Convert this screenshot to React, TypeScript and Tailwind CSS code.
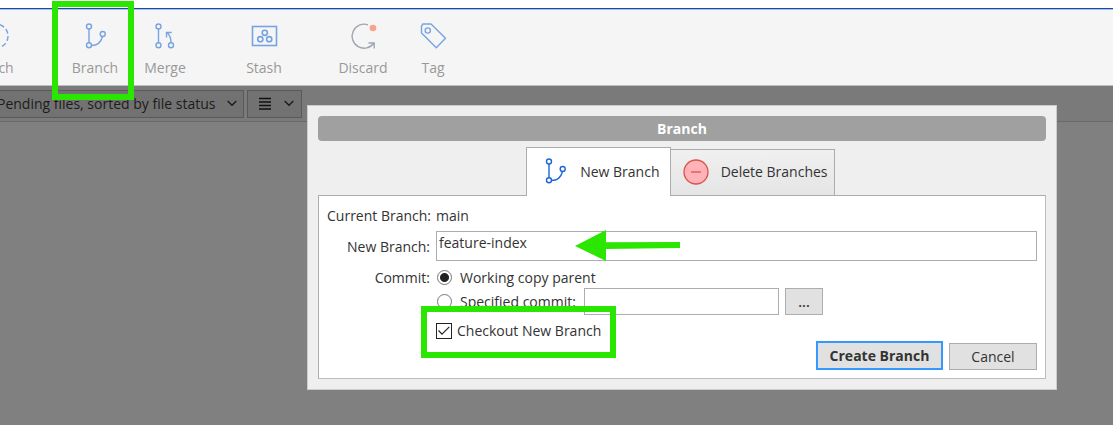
import { useState } from "react";
import type { ReactNode } from "react";

function BranchGlyph({ color }: { color: string }) {
  return (
    <svg width="26" height="28" viewBox="0 0 26 28" fill="none" stroke={color} strokeWidth="1.4">
      <path d="M7 7v14M9.500 23.500c6 0 9.500-3 11-9" />
      <circle cx="7" cy="4.500" r="2.500" />
      <circle cx="7" cy="23.300" r="2.500" />
      <circle cx="20.700" cy="12" r="2.500" />
    </svg>
  );
}

function FetchGlyph() {
  return (
    <svg width="28" height="28" viewBox="0 0 28 28" fill="none" stroke="#78a3e3" strokeWidth="1.4">
      <circle cx="14" cy="14" r="12" strokeDasharray="5 2.500" />
    </svg>
  );
}

function MergeGlyph() {
  return (
    <svg width="26" height="28" viewBox="0 0 26 28" fill="none" stroke="#78a3e3" strokeWidth="1.4">
      <path d="M6.500 7v14M19 21c0-4.500-1-8-4.200-10.500M14.500 15.500v-5h5.200" />
      <circle cx="6.500" cy="4.500" r="2.500" />
      <circle cx="6.500" cy="23.300" r="2.500" />
      <circle cx="19" cy="23.300" r="2.500" />
    </svg>
  );
}

function StashGlyph() {
  return (
    <svg width="28" height="28" viewBox="0 0 28 28" fill="none" stroke="#78a3e3" strokeWidth="1.6">
      <rect x="2.500" y="4.500" width="24" height="19" />
      <circle cx="14.800" cy="10.800" r="2.600" />
      <circle cx="10.300" cy="17.200" r="2.600" />
      <circle cx="19.200" cy="17.200" r="2.600" />
    </svg>
  );
}

function DiscardGlyph() {
  return (
    <svg width="28" height="28" viewBox="0 0 28 28" fill="none" stroke="#a0a7b1" strokeWidth="1.4">
      <path d="M19 2.800A12 12 0 1 0 25 21M19.500 21h5.700v5.500" />
      <circle cx="24" cy="6" r="3.300" fill="#fba18f" stroke="none" />
    </svg>
  );
}

function TagGlyph() {
  return (
    <svg width="28" height="28" viewBox="0 0 28 28" fill="none" stroke="#78a3e3" strokeWidth="1.4" strokeLinejoin="round">
      <path d="M4 2h8L26.500 16.300 17.300 25.800 2.500 11V4z" />
      <circle cx="8.800" cy="8.500" r="2.600" />
    </svg>
  );
}

function DeleteGlyph() {
  return (
    <svg width="26" height="26" viewBox="0 0 26 26" fill="none" stroke="#d9534a" strokeWidth="1.300">
      <circle cx="13" cy="13" r="12" fill="#ffb3b8" />
      <path d="M8 13h10" />
    </svg>
  );
}

function Chevron() {
  return (
    <svg width="10" height="7" viewBox="0 0 10 7" fill="none" stroke="#1c1c1c" strokeWidth="1.400">
      <path d="M0.700 1L5 5.300 9.300 1" />
    </svg>
  );
}

function Tool({ icon, label, marked = false }: { icon: ReactNode; label: string; marked?: boolean }) {
  return (
    <button type="button" className="relative flex w-[70px] shrink-0 flex-col items-center pt-[13px] text-[#999]">
      {icon}
      <span className="mt-2 leading-5">{label}</span>
      {marked && (
        <span className="pointer-events-none absolute -top-2 -right-1 -left-2 z-10 h-[99px] border-6 border-[#2be600]" />
      )}
    </button>
  );
}

const radio =
  "m-0 size-[15px] shrink-0 appearance-none rounded-full border border-[#777] bg-white checked:bg-[radial-gradient(circle,#222_0_4px,#fff_5px)]";

export default function App() {
  const [name, setName] = useState("feature-index");
  const [source, setSource] = useState("parent");
  const [commit, setCommit] = useState("");
  const [checkout, setCheckout] = useState(true);

  return (
    <div className="relative flex min-h-screen flex-col overflow-hidden bg-[#808080] font-['Open_Sans','Noto_Sans',sans-serif] text-[14px] text-[#333]">
      <div className="h-2 bg-white" />
      <nav className="flex h-[78px] border-t border-b border-t-[#0a4db5] border-b-[#bfbfbf] bg-[#f5f5f5] shadow-[inset_0_1px_0_#b3c0d9]">
        <div className="-ml-[39px] flex gap-[29px]">
          <Tool icon={<FetchGlyph />} label="Fetch" />
          <div className="flex">
            <Tool icon={<BranchGlyph color="#78a3e3" />} label="Branch" marked />
            <Tool icon={<MergeGlyph />} label="Merge" />
          </div>
          <Tool icon={<StashGlyph />} label="Stash" />
          <div className="flex">
            <Tool icon={<DiscardGlyph />} label="Discard" />
            <Tool icon={<TagGlyph />} label="Tag" />
          </div>
        </div>
      </nav>

      <div className="flex h-9 items-center gap-[3px] border-b border-[#696969] bg-[#7a7a7a]">
        <div className="relative -ml-2">
          <select
            aria-label="File filter"
            className="block h-7 w-[252px] appearance-none border border-[#5a5a5a] bg-[#727272] pl-1 text-[#1c1c1c]"
          >
            <option>Pending files, sorted by file status</option>
          </select>
          <span className="pointer-events-none absolute inset-y-0 right-[7px] flex items-center">
            <Chevron />
          </span>
        </div>
        <button
          type="button"
          aria-label="View options"
          className="flex h-7 w-[55px] items-center justify-between border border-[#5a5a5a] bg-[#727272] pr-[7px] pl-[11px]"
        >
          <svg width="12" height="14" viewBox="0 0 12 14" stroke="#111" strokeWidth="1.300">
            <path d="M0 1.500h12M0 5h12M0 8.500h12M0 12h12" />
          </svg>
          <Chevron />
        </button>
      </div>

      <div
        role="dialog"
        aria-labelledby="dialog-title"
        className="absolute top-[105px] right-14 left-[307px] border border-[#ccc] bg-[#efefef] p-2.5"
      >
        <h1 id="dialog-title" className="rounded bg-[#a0a0a0] text-center leading-[25px] font-bold text-white">
          Branch
        </h1>

        <div role="tablist" className="-mb-px flex items-end justify-center pt-1.5 pr-1">
          <button
            type="button"
            role="tab"
            aria-selected="true"
            className="flex h-[49px] w-[145px] items-center justify-between border border-b-0 border-[#acacac] bg-white pr-2.5 pb-0.5 pl-[15px]"
          >
            <BranchGlyph color="#1f66d6" />
            New Branch
          </button>
          <button
            type="button"
            role="tab"
            aria-selected="false"
            className="flex h-[47px] w-[164px] items-center justify-between border border-l-0 border-[#acacac] bg-linear-to-b from-[#f0f0f0] to-[#e5e5e5] pr-1.5 pb-0.5 pl-3"
          >
            <DeleteGlyph />
            Delete Branches
          </button>
        </div>

        <form
          onSubmit={(e) => e.preventDefault()}
          className="border border-[#bcbcbc] border-t-[#acacac] border-l-[#acacac] bg-white pt-2.5 pr-2 pb-2 pl-2"
        >
          <div className="grid grid-cols-[103px_1fr] gap-x-1.5 leading-5">
            <span className="text-right whitespace-nowrap">Current Branch:</span>
            <span>main</span>

            <label htmlFor="name" className="mt-[5px] text-right leading-8">
              New Branch:
            </label>
            <div className="relative mt-[5px]">
              <input
                id="name"
                value={name}
                onChange={(e) => setName(e.target.value)}
                className="block h-[30px] w-full border border-[#abadb3] bg-white px-0.5 pb-[7px] outline-none"
              />
              <svg
                className="pointer-events-none absolute -top-0.5 left-[139px]"
                width="106"
                height="32"
                viewBox="0 0 106 32"
                fill="#2be600"
                aria-hidden="true"
              >
                <path d="M0 17L31 1V13.300L105 13V19L31 20V32z" />
              </svg>
            </div>

            <span className="mt-[5px] text-right">Commit:</span>
            <label className="mt-1 flex h-[21px] items-center gap-2 pl-px">
              <input
                type="radio"
                name="source"
                className={radio}
                checked={source === "parent"}
                onChange={() => setSource("parent")}
              />
              Working copy parent
            </label>

            <div className="col-start-2 flex gap-1.5">
              <label className="flex w-[142px] items-center gap-2 pl-px whitespace-nowrap">
                <input
                  type="radio"
                  name="source"
                  className={radio}
                  checked={source === "specified"}
                  onChange={() => setSource("specified")}
                />
                Specified commit:
              </label>
              <input
                aria-label="Commit to branch from"
                value={commit}
                onChange={(e) => setCommit(e.target.value)}
                className="h-[27px] w-[195px] border border-[#abadb3] bg-white px-1 outline-none"
              />
              <button
                type="button"
                aria-label="Choose commit"
                className="h-[27px] w-[38px] border border-[#adadad] bg-[#e1e1e1] font-semibold"
              >
                ...
              </button>
            </div>

            <label className="relative col-start-2 mt-1.5 flex items-center gap-[5px] justify-self-start">
              <span className="relative flex size-4">
                <input
                  type="checkbox"
                  checked={checkout}
                  onChange={(e) => setCheckout(e.target.checked)}
                  className="peer m-0 size-4 appearance-none border border-[#222] bg-white"
                />
                <svg
                  className="pointer-events-none absolute inset-0 hidden peer-checked:block"
                  width="16"
                  height="16"
                  viewBox="0 0 16 16"
                  fill="none"
                  stroke="#222"
                  strokeWidth="1.200"
                >
                  <path d="M2.500 7.500L6 11.200 13.300 3.800" />
                </svg>
              </span>
              Checkout New Branch
              <span className="pointer-events-none absolute -inset-x-[15px] -top-[15px] h-[52px] border-6 border-[#2be600]" />
            </label>
          </div>

          <div className="flex items-end justify-end gap-1.5">
            <button type="submit" className="h-[29px] w-[127px] border-2 border-[#3399ff] bg-[#e1e1e1] font-bold">
              Create Branch
            </button>
            <button type="button" className="h-[27px] w-[88px] border border-[#adadad] bg-[#e1e1e1]">
              Cancel
            </button>
          </div>
        </form>
      </div>
    </div>
  );
}
